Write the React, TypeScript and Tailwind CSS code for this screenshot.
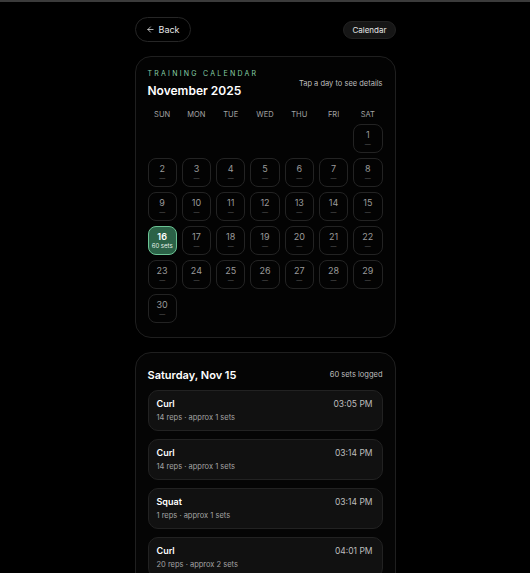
import { ArrowLeft } from 'lucide-react';

const DAYS = ['SUN', 'MON', 'TUE', 'WED', 'THU', 'FRI', 'SAT'];

const entries = [
  { name: 'Curl', detail: '14 reps · approx 1 sets', time: '03:05 PM' },
  { name: 'Curl', detail: '14 reps · approx 1 sets', time: '03:14 PM' },
  { name: 'Squat', detail: '1 reps · approx 1 sets', time: '03:14 PM' },
  { name: 'Curl', detail: '20 reps · approx 2 sets', time: '04:01 PM' },
];

export default function App() {
  // Nov 2025 starts on a Saturday
  const cells: (number | null)[] = [...Array(6).fill(null), ...Array.from({ length: 30 }, (_, i) => i + 1)];

  return (
    <div className="min-h-[573px] bg-black font-['Inter',sans-serif] text-white border-t-2 border-[#3b3b3b]">
      <div className="mx-auto w-[261px] pt-[15px] pb-6">
        {/* Top bar */}
        <div className="flex items-center justify-between">
          <button className="flex h-[25px] items-center gap-1 rounded-full border border-[#262626] px-[10px] text-[9px] text-[#e5e5e5]">
            <ArrowLeft size={9} strokeWidth={2} />
            Back
          </button>
          <span className="rounded-full bg-[#161616] border border-[#222] px-[8px] py-[3px] text-[8px] leading-[10px] text-[#e5e5e5]">
            Calendar
          </span>
        </div>

        {/* Calendar card */}
        <section className="mt-[14px] rounded-[16px] border border-[#1f1f1f] bg-[#030303] px-[12px] pt-[12px] pb-[14px]">
          <div className="flex items-start justify-between">
            <div>
              <div className="text-[7px] leading-[10px] tracking-[0.32em] text-[#86cfa5]">TRAINING CALENDAR</div>
              <h1 className="mt-[4px] text-[12px] font-semibold leading-[16px]">November 2025</h1>
            </div>
            <div className="mt-[10px] text-[7.5px] leading-[10px] text-[#bdbdbd]">Tap a day to see details</div>
          </div>

          <div className="mt-[11px] grid grid-cols-7 gap-x-[5px]">
            {DAYS.map(d => (
              <div key={d} className="text-center text-[7.5px] leading-[10px] text-[#a3a3a3]">{d}</div>
            ))}
          </div>

          <div className="mt-[4px] grid grid-cols-7 gap-[5px]">
            {cells.map((day, i) =>
              day === null ? (
                <div key={i} className="h-[29px]" />
              ) : day === 16 ? (
                <div
                  key={i}
                  className="flex h-[29px] flex-col items-center justify-center rounded-[8px] border-[1.5px] border-[#6cc495] bg-[#2b6247]"
                >
                  <span className="text-[9px] font-semibold leading-[11px] text-white">16</span>
                  <span className="text-[6px] leading-[8px] text-[#e6f3ec]">60 sets</span>
                </div>
              ) : (
                <div
                  key={i}
                  className="flex h-[29px] flex-col items-center justify-center rounded-[8px] border border-[#232323]"
                >
                  <span className="text-[9px] leading-[11px] text-[#9a9a9a]">{day}</span>
                  <span className="text-[6px] leading-[8px] text-[#5a5a5a]">—</span>
                </div>
              )
            )}
          </div>
        </section>

        {/* Day details */}
        <section className="mt-[14px] rounded-[16px] border border-[#1f1f1f] bg-[#050505] px-[12px] pt-[14px] pb-[13px]">
          <div className="flex items-center justify-between">
            <h2 className="text-[11px] font-semibold leading-[16px]">Saturday, Nov 15</h2>
            <span className="text-[7.5px] text-[#bdbdbd]">60 sets logged</span>
          </div>

          <div className="mt-[7px] flex flex-col gap-[8px]">
            {entries.map((e, i) => (
              <div key={i} className="rounded-[10px] border border-[#222] bg-[#111] pl-[8px] pr-[9px] py-[7px]">
                <div className="flex items-center justify-between">
                  <span className="text-[9px] font-semibold leading-[12px]">{e.name}</span>
                  <span className="text-[8.5px] leading-[12px] text-[#bdbdbd]">{e.time}</span>
                </div>
                <div className="mt-[3px] text-[7.5px] leading-[10px] text-[#a3a3a3]">{e.detail}</div>
              </div>
            ))}
          </div>
        </section>
      </div>
    </div>
  );
}
